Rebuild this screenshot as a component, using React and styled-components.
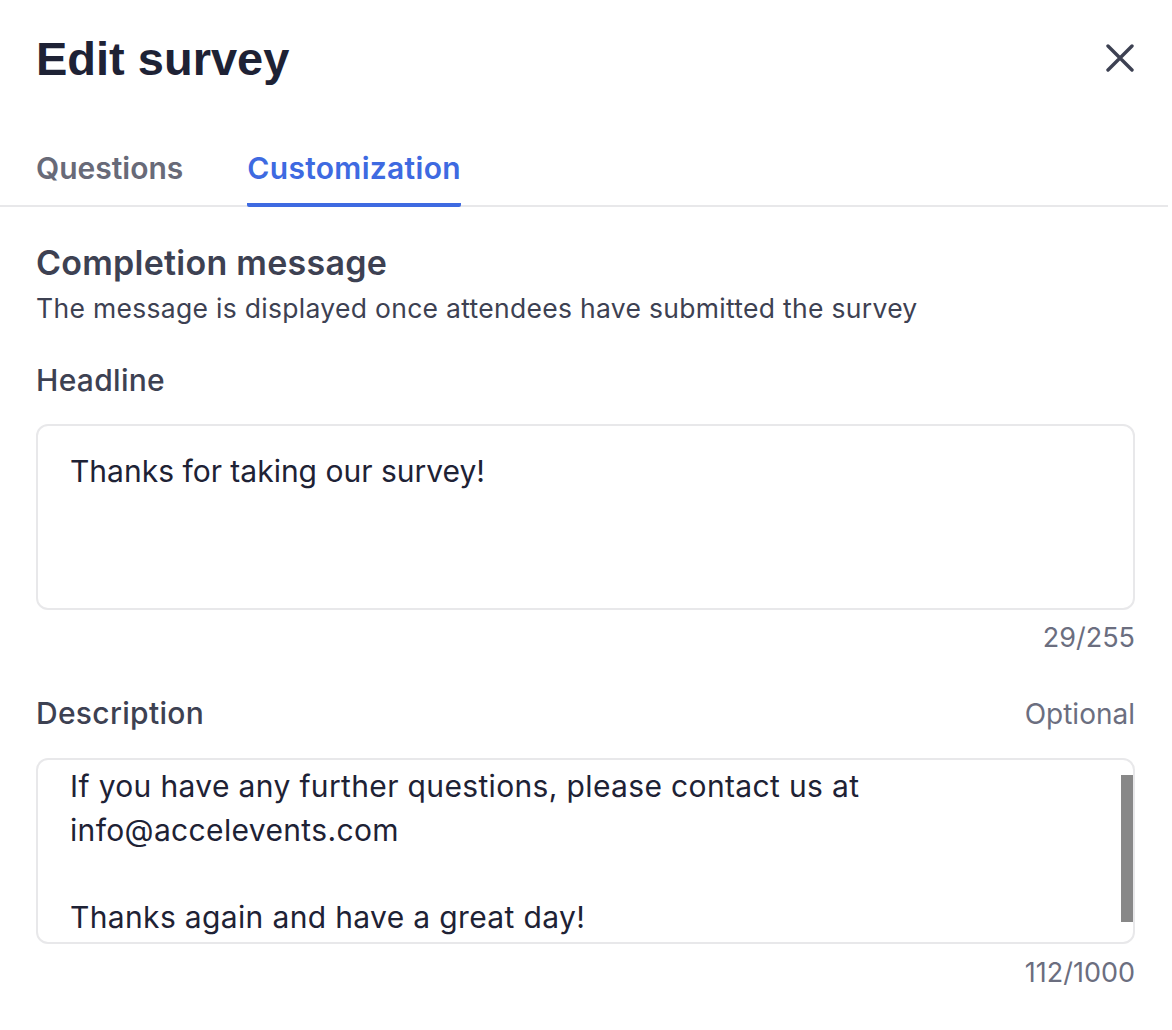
import React from 'react';
import styled, { createGlobalStyle } from 'styled-components';

const GlobalStyle = createGlobalStyle`
  body {
    margin: 0;
    background: #ffffff;
    font-family: Inter, "Noto Sans", sans-serif;
    color: #3d4152;
  }
`;

const Panel = styled.div`
  width: 1168px;
  display: flex;
  flex-direction: column;
`;

const Header = styled.div`
  display: flex;
  justify-content: space-between;
  align-items: center;
  padding: 26px 33px 0 36px;
  height: 64px;
`;

const Title = styled.h1`
  margin: 0;
  font-family: "Liberation Sans", Arial, sans-serif;
  font-weight: 700;
  font-size: 47px;
  color: #1e2235;
`;

const CloseButton = styled.button`
  border: none;
  background: none;
  padding: 0;
  width: 30px;
  height: 30px;
  display: flex;
  align-items: center;
  justify-content: center;
  cursor: pointer;
`;

const Tabs = styled.div`
  display: flex;
  gap: 64px;
  padding: 0 36px;
  margin-top: 60px;
  border-bottom: 2px solid #e8e8ea;
`;

const Tab = styled.div`
  font-size: 30px;
  line-height: 36px;
  font-weight: 600;
  letter-spacing: ${p => (p.active ? '0.3px' : '0')};
  color: ${p => (p.active ? '#3e6ae1' : '#686a78')};
  padding-bottom: 17px;
  border-bottom: 4px solid ${p => (p.active ? '#3e6ae1' : 'transparent')};
  margin-bottom: -2px;
  border-radius: 0 0 2px 2px;
`;

const Body = styled.div`
  padding: 0 33px 0 36px;
  display: flex;
  flex-direction: column;
`;

const SectionTitle = styled.h2`
  margin: 36px 0 0 0;
  font-size: 34px;
  font-weight: 600;
  letter-spacing: 0.25px;
  color: #3d4152;
  line-height: 40px;
`;

const SectionHint = styled.p`
  margin: 8px 0 0 0;
  font-size: 26.5px;
  letter-spacing: 0.3px;
  color: #3d4152;
  line-height: 34px;
`;

const LabelRow = styled.div`
  display: flex;
  justify-content: space-between;
  align-items: baseline;
  margin-top: ${p => p.top}px;
`;

const Label = styled.span`
  font-size: 30px;
  font-weight: 500;
  letter-spacing: 0.3px;
  color: #3d4152;
  line-height: 36px;
`;

const Optional = styled.span`
  font-size: 28px;
  color: #6b6e7f;
`;

const TextBox = styled.div`
  position: relative;
  margin-top: ${p => p.top}px;
  height: 186px;
  box-sizing: border-box;
  border: 2px solid #e8e8ea;
  border-radius: 12px;
  padding: ${p => p.padTop}px 40px 0 32px;
  overflow: hidden;
  font-size: 30px;
  letter-spacing: ${p => p.spacing || 0}px;
  line-height: 43.5px;
  color: #1e2235;
  white-space: pre-wrap;
`;

const ScrollThumb = styled.div`
  position: absolute;
  right: 0;
  top: 15px;
  width: 12px;
  height: 147px;
  background: #888888;
`;

const Counter = styled.div`
  text-align: right;
  margin-top: ${p => p.top}px;
  font-size: 27px;
  color: #6b6e7f;
  line-height: 32px;
`;

const CloseIcon = () => (
  <svg width="28" height="28" viewBox="0 0 28 28" fill="none">
    <path d="M2 2L26 26M26 2L2 26" stroke="#3d4152" strokeWidth="3.4" strokeLinecap="round" />
  </svg>
);

export default function App() {
  const description =
    'If you have any further questions, please contact us at\ninfo@accelevents.com\n\nThanks again and have a great day!';
  return (
    <Panel>
      <GlobalStyle />
      <Header>
        <Title>Edit survey</Title>
        <CloseButton aria-label="Close">
          <CloseIcon />
        </CloseButton>
      </Header>
      <Tabs>
        <Tab>Questions</Tab>
        <Tab active>Customization</Tab>
      </Tabs>
      <Body>
        <SectionTitle>Completion message</SectionTitle>
        <SectionHint>The message is displayed once attendees have submitted the survey</SectionHint>

        <LabelRow top={37}>
          <Label>Headline</Label>
        </LabelRow>
        <TextBox top={26} padTop={24}>Thanks for taking our survey!</TextBox>
        <Counter top={12}>29/255</Counter>

        <LabelRow top={41}>
          <Label>Description</Label>
          <Optional>Optional</Optional>
        </LabelRow>
        <TextBox top={27} padTop={5} spacing={0.35}>
          {description}
          <ScrollThumb />
        </TextBox>
        <Counter top={13}>112/1000</Counter>
      </Body>
    </Panel>
  );
}
